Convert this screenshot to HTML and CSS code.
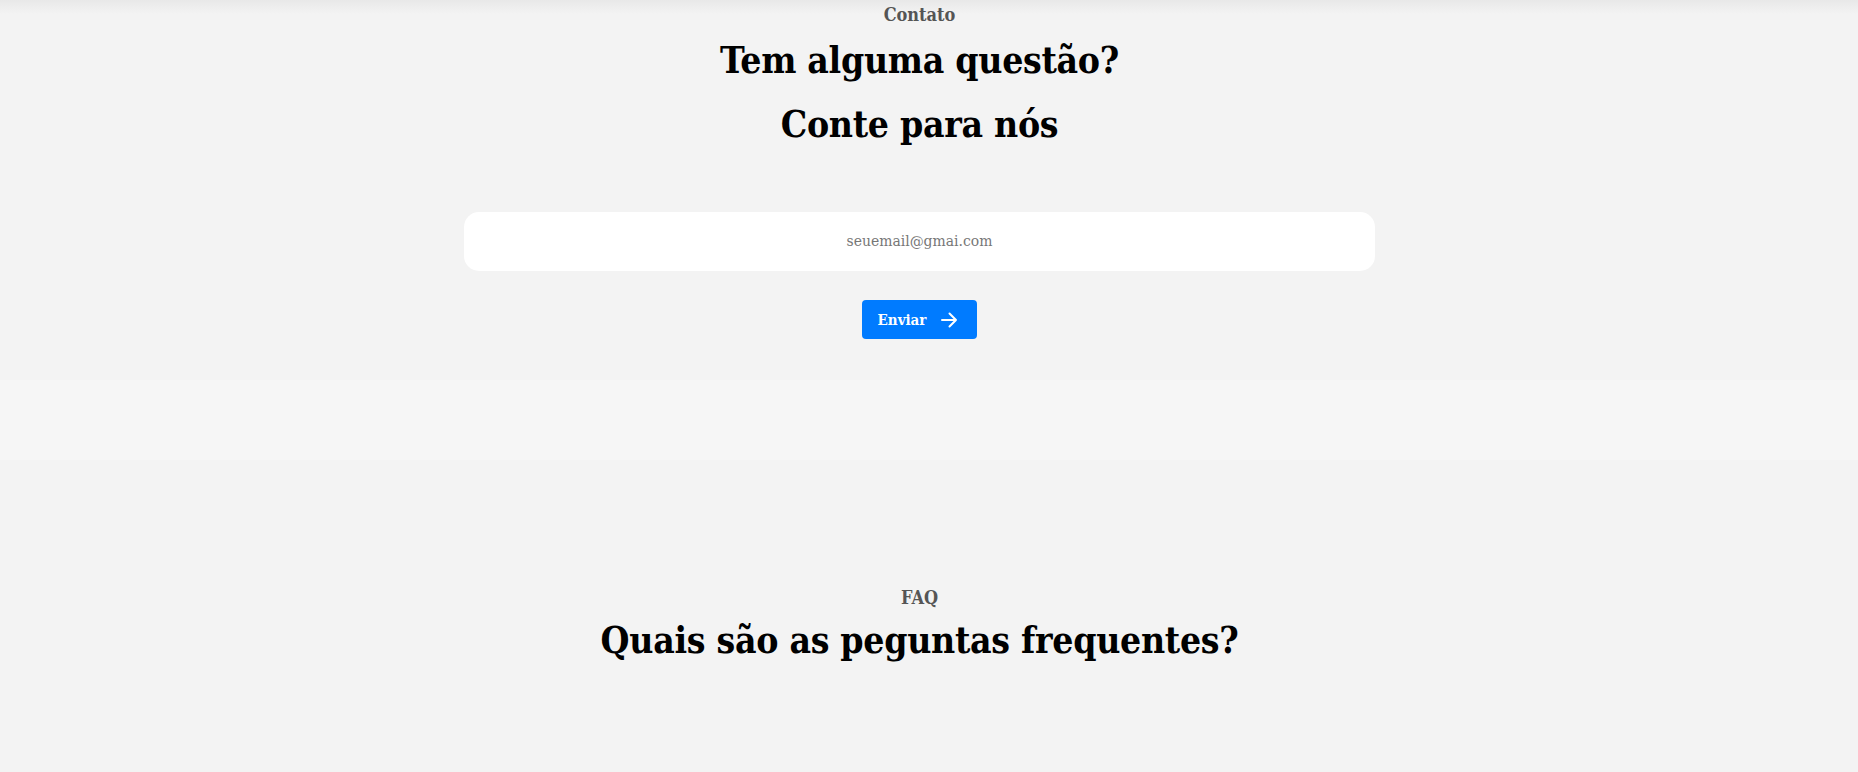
FILE: index.html
```html
<!DOCTYPE html>
<html lang="pt-BR">
<head>
<meta charset="utf-8">
<title>Contato</title>
<link rel="stylesheet" href="styles.css">
</head>
<body>
<main class="page">
  <section class="contact">
    <p class="eyebrow">Contato</p>
    <h2 class="title title-contact">Tem alguma questão?<br>Conte para nós</h2>
    <form class="form">
      <input class="email" type="email" placeholder="seuemail@gmai.com">
      <button class="send" type="button">
        <span>Enviar</span>
        <svg class="arrow" width="18" height="16" viewBox="0 0 18 16" fill="none" stroke="#fff" stroke-width="2" stroke-linecap="round" stroke-linejoin="round"><path d="M2 8h14M9.5 1.5 16 8l-6.5 6.5"/></svg>
      </button>
    </form>
  </section>
  <div class="band"></div>
  <section class="faq">
    <p class="eyebrow">FAQ</p>
    <h2 class="title title-faq">Quais são as peguntas frequentes?</h2>
  </section>
</main>
</body>
</html>
```

FILE: styles.css
```css
* { box-sizing: border-box; }

html, body {
  margin: 0;
  padding: 0;
}

body {
  background: linear-gradient(#e8e8e8 0, #f3f3f3 14px) no-repeat, #f3f3f3;
  font-family: "DejaVu Serif", "Liberation Serif", serif;
  font-stretch: condensed;
  color: #000;
  min-height: 772px;
}

.page {
  display: flex;
  flex-direction: column;
}

.contact,
.faq {
  display: flex;
  flex-direction: column;
  align-items: center;
  padding-right: 19px;
}

.contact {
  padding-top: 1px;
  padding-bottom: 41px;
}

.eyebrow {
  margin: 0;
  font-size: 18px;
  line-height: 27px;
  font-weight: 700;
  color: #555;
  font-stretch: condensed;
}

.title {
  margin: 0;
  text-align: center;
  font-weight: 700;
  font-size: 37px;
  font-stretch: condensed;
  letter-spacing: -0.3px;
  color: #000;
}

.title-contact {
  line-height: 64px;
}

.title-faq {
  line-height: 48px;
  margin-top: 5px;
}

.form {
  display: flex;
  flex-direction: column;
  align-items: center;
  margin-top: 56px;
}

.email {
  width: 911px;
  height: 59px;
  border: none;
  border-radius: 15px;
  background: #fff;
  text-align: center;
  font-family: "DejaVu Serif", serif;
  font-stretch: condensed;
  font-size: 15.5px;
  color: #333;
  outline: none;
  padding-bottom: 2px;
}

.email::placeholder {
  color: #777;
}

.send {
  display: flex;
  align-items: center;
  gap: 14px;
  margin-top: 29px;
  height: 39px;
  padding: 0 19px 0 16px;
  border: none;
  border-radius: 4px;
  background: #007bff;
  color: #fff;
  font-family: "DejaVu Serif", serif;
  font-stretch: condensed;
  font-weight: 700;
  font-size: 15px;
  cursor: pointer;
}

.arrow {
  display: block;
}

.band {
  height: 80px;
  background: #f6f6f6;
}

.faq {
  padding-top: 124px;
}
```
